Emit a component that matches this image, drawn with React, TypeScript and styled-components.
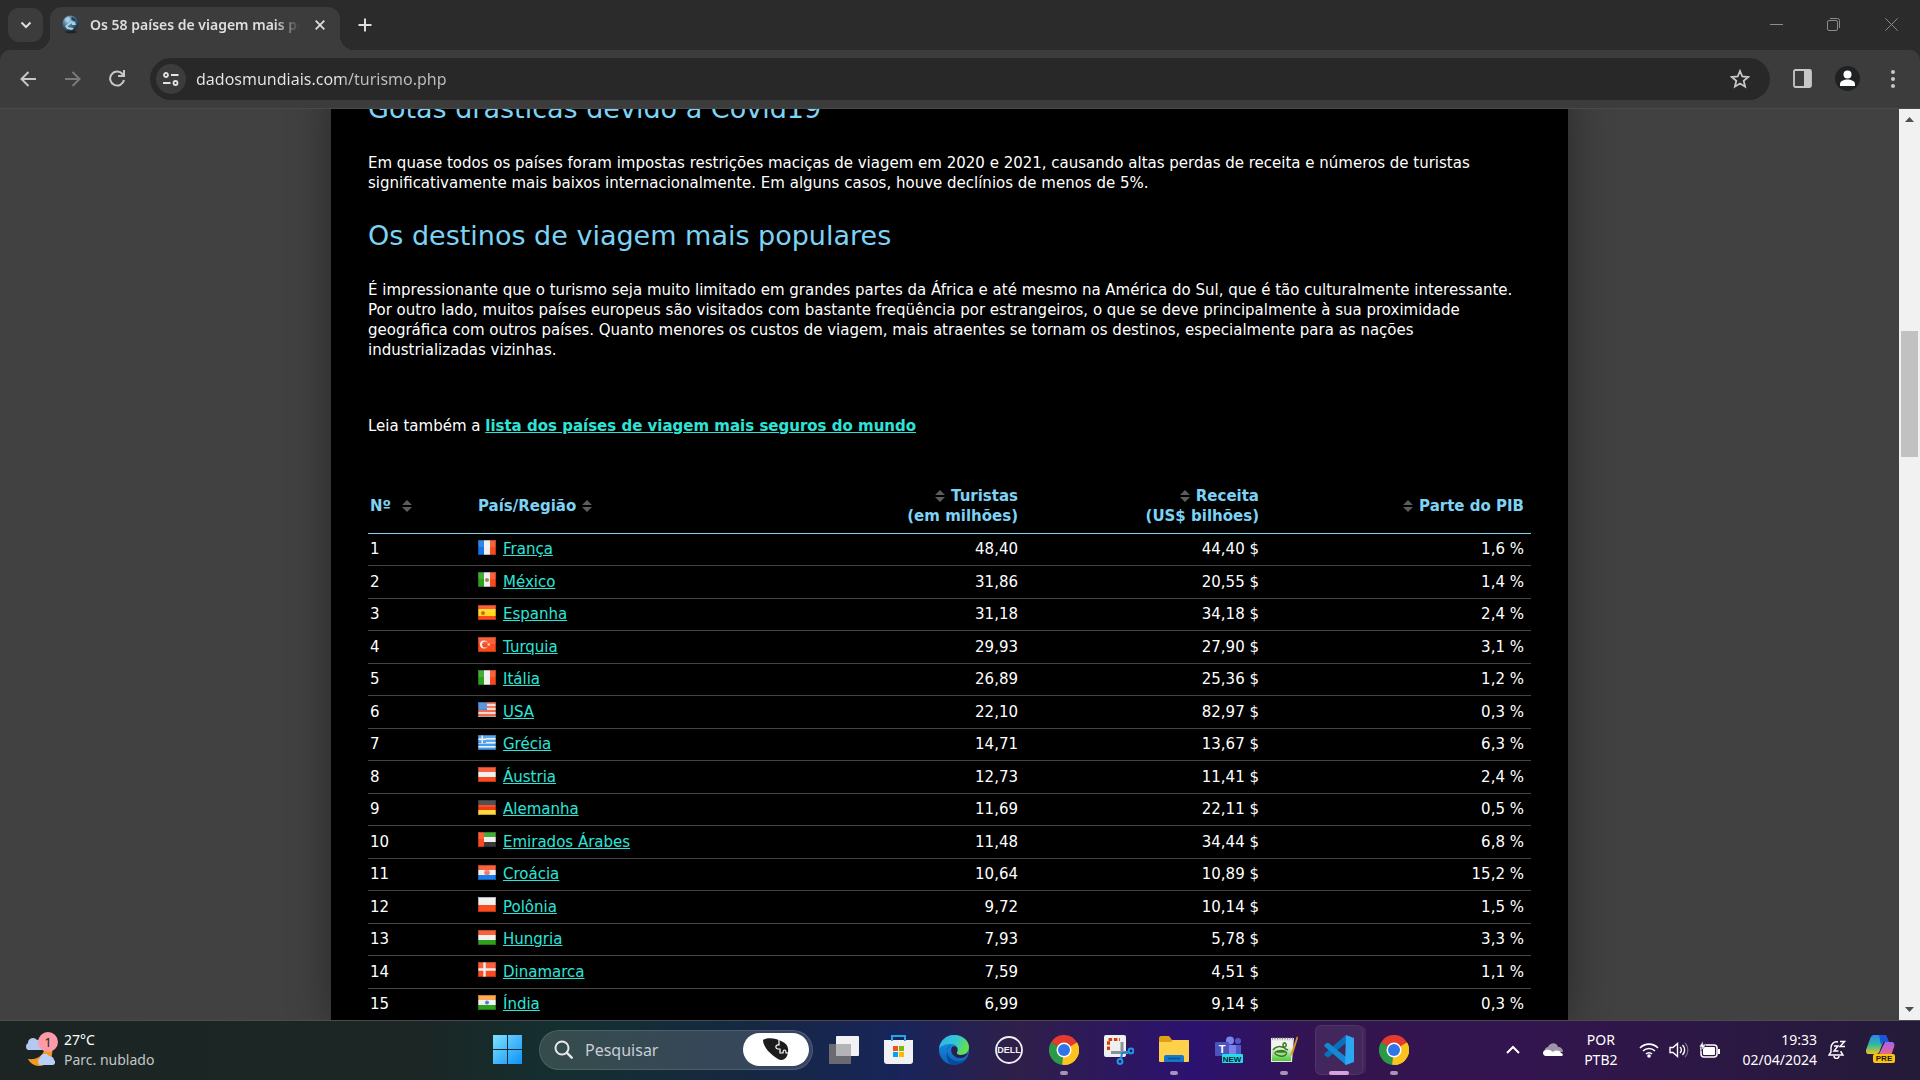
import React from "react";
import styled, { createGlobalStyle, css } from "styled-components";

const uiFont = `"Noto Sans", "Open Sans", sans-serif`;
const pageFont = `"DejaVu Sans", Verdana, sans-serif`;

const GlobalStyle = createGlobalStyle`
  *, *::before, *::after { box-sizing: border-box; }
  html, body { margin: 0; height: 100%; background: #2b2b2b; overflow: hidden; }
  button, input { font: inherit; color: inherit; border: 0; padding: 0; margin: 0; background: none; outline: 0; }
  svg { display: block; flex: none; }
`;

const Screen = styled.div`
  height: 100vh;
  display: flex;
  flex-direction: column;
  font-family: ${uiFont};
`;

/* ---------- browser frame ---------- */

const TabStrip = styled.div`
  flex: none;
  height: 50px;
  display: flex;
  align-items: flex-end;
  padding-left: 8px;
  background: #2b2b2b;
  color: #dedede;
`;

const TabSearch = styled.button`
  width: 35px;
  height: 34px;
  margin: 0 7px 8px 0;
  display: grid;
  place-items: center;
  border-radius: 11px;
  background: #3c3c3c;
`;

const Tab = styled.div`
  position: relative;
  width: 290px;
  height: 43px;
  display: flex;
  align-items: center;
  padding: 0 12px 8px;
  border-radius: 12px 12px 0 0;
  background: #3c3c3c;

  &::before, &::after {
    content: "";
    position: absolute;
    bottom: 0;
    width: 14px;
    height: 14px;
  }
  &::before { right: 100%; background: radial-gradient(circle at 0 0, transparent 14px, #3c3c3c 14px); }
  &::after { left: 100%; background: radial-gradient(circle at 100% 0, transparent 14px, #3c3c3c 14px); }
`;

const TabTitle = styled.span`
  flex: 1;
  margin: 0 12px 0 11px;
  overflow: hidden;
  white-space: nowrap;
  font-size: 14px;
  line-height: 20px;
  font-weight: 600;
  mask-image: linear-gradient(90deg, #000 88%, transparent);
`;

const IconButton = styled.button<{ $w: number; $h?: number }>`
  flex: none;
  width: ${(p) => p.$w}px;
  height: ${(p) => p.$h ?? 34}px;
  display: grid;
  place-items: center;
`;

const NewTab = styled(IconButton)`
  margin: 0 0 8px 8px;
`;

const WindowControls = styled.div`
  margin-left: auto;
  align-self: stretch;
  display: flex;
  color: #8c8c8c;
`;

const ToolbarBack = styled.div`
  flex: none;
  background: #2b2b2b;
`;

const Toolbar = styled.div`
  height: 59px;
  display: flex;
  align-items: center;
  padding: 0 5px 1px 5px;
  border-radius: 10px 10px 0 0;
  border-bottom: 1px solid #4a4a4a;
  background: #3c3c3c;
  color: #c7c7c7;
`;

const AddressBar = styled.div`
  flex: 1;
  height: 42px;
  margin: 0 10px;
  display: flex;
  align-items: center;
  padding: 0 8px 0 6px;
  border-radius: 21px;
  background: #282828;
`;

const SiteInfo = styled(IconButton)`
  border-radius: 50%;
  background: #3c3c3c;
  margin-right: 10px;
  color: #e3e3e3;
`;

const AddressInput = styled.input`
  flex: 1;
  min-width: 0;
  height: 28px;
  font-size: 16px;
  background: linear-gradient(90deg, #e8e8e8 145px, #c0c0c0 145px);
  background-clip: text;
  -webkit-background-clip: text;
  -webkit-text-fill-color: transparent;
`;

/* ---------- web page ---------- */

const Viewport = styled.div`
  flex: 1;
  min-height: 0;
  display: flex;
`;

const PageArea = styled.main`
  flex: 1;
  min-width: 0;
  overflow: hidden;
  background: #414141;
`;

const Article = styled.article`
  max-width: 1237px;
  min-height: 100%;
  margin: -18px auto 0;
  padding: 0 37px;
  background: #000;
  box-shadow: 0 0 40px rgba(0, 0, 0, 0.4);
  color: #fff;
  font-family: ${pageFont};
  font-size: 15px;
  line-height: 20px;
`;

const Heading = styled.h2`
  margin: 0 0 26px;
  font-size: 27px;
  line-height: 36px;
  font-weight: 400;
  color: #7dd3f5;
`;

const Paragraph = styled.p<{ $after: number }>`
  margin: 0 0 ${(p) => p.$after}px;
`;

const Link = styled.a<{ $strong?: boolean }>`
  color: #2ce5d8;
  font-weight: ${(p) => (p.$strong ? 700 : 400)};
  text-decoration: underline;
  text-underline-offset: 1px;
`;

const Table = styled.table`
  width: 100%;
  table-layout: fixed;
  border-collapse: collapse;
`;

const cell = css<{ $right?: boolean }>`
  padding: 0 7px 0 2px;
  text-align: ${(p) => (p.$right ? "right" : "left")};
`;

const HeadCell = styled.th<{ $right?: boolean }>`
  ${cell}
  height: 53px;
  vertical-align: middle;
  border-bottom: 1px solid #87d3ea;
  color: #7dd3f5;
`;

const SortIcon = styled.svg`
  margin-top: 4px;
`;

const Row = styled.tr`
  height: 32px;
  border-bottom: 1px solid #444;
  &:nth-child(even) { height: 33px; }
`;

const Cell = styled.td<{ $right?: boolean }>`
  ${cell}
`;

const Country = styled.span`
  display: flex;
  align-items: center;
  gap: 7px;
`;

const FlagSvg = styled.svg`
  margin-bottom: 4px;
`;

const HeaderLabel = styled.span`
  display: block;
  white-space: nowrap;
`;

const FirstLine = styled.span<{ $right?: boolean }>`
  display: flex;
  gap: 6px;
  justify-content: ${(p) => (p.$right ? "flex-end" : "flex-start")};
  white-space: pre;
`;

const HeaderButton = styled.button`
  width: 100%;
  display: block;
  font-weight: 700;
  text-align: inherit;
`;

const Scrollbar = styled.div`
  flex: none;
  width: 21px;
  display: flex;
  flex-direction: column;
  align-items: center;
  background: #f1f1f1;
  color: #505050;
`;

const ScrollSpace = styled.div<{ $grow: number }>`
  flex: ${(p) => p.$grow} 1 0;
`;

const Thumb = styled.div`
  flex: 126 1 0;
  width: 17px;
  background: #c1c1c1;
`;

/* ---------- taskbar ---------- */

const Taskbar = styled.footer`
  flex: none;
  height: 60px;
  display: grid;
  grid-template-columns: 1fr auto 1fr;
  align-items: center;
  padding: 0 18px 2px 0;
  border-top: 1px solid #4b4a52;
  color: #fff;
  background: linear-gradient(90deg, #1c2524 0%, #1b2625 22%, #142f30 29%, #15293f 38%, #18245a 47%, #2f1f49 53%, #2b1270 62%, #34144f 69%, #32154e 80%, #241b38 100%);
`;

const Weather = styled.button`
  justify-self: start;
  display: flex;
  align-items: center;
  gap: 4px;
  margin-left: 24px;
  text-align: left;
`;

const Lines = styled.span<{ $align?: string }>`
  display: flex;
  flex-direction: column;
  text-align: ${(p) => p.$align ?? "left"};
  font-size: 14px;
  line-height: 20px;
  white-space: nowrap;
`;

const Dim = styled.span`
  color: #c3c6c6;
`;

const Apps = styled.div`
  display: flex;
  align-items: center;
  gap: 7px;
`;

const AppButton = styled.button<{ $active?: boolean }>`
  position: relative;
  width: 48px;
  height: 50px;
  display: grid;
  place-items: center;
  border-radius: 6px;
  ${(p) => p.$active && "background: rgba(255,255,255,.08); box-shadow: inset 0 0 0 1px rgba(255,255,255,.07), 4px 0 0 -1px rgba(255,255,255,.07);"}
`;

const Running = styled.span<{ $active?: boolean }>`
  position: absolute;
  left: 50%;
  bottom: 0;
  width: ${(p) => (p.$active ? 20 : 8)}px;
  height: 4px;
  border-radius: 2px;
  transform: translateX(-50%);
  background: ${(p) => (p.$active ? "#d9a0e0" : "#a394b8")};
`;

const SearchBox = styled.label`
  width: 274px;
  height: 40px;
  display: flex;
  align-items: center;
  gap: 12px;
  padding: 0 3px 0 14px;
  border-radius: 20px;
  border: 1px solid rgba(255, 255, 255, 0.12);
  background: rgba(255, 255, 255, 0.14);
`;

const SearchInput = styled.input`
  flex: 1;
  min-width: 0;
  font-size: 16px;
  line-height: 22px;
  &::placeholder { color: #c8ced6; opacity: 1; }
`;

const Highlight = styled.button`
  width: 66px;
  height: 33px;
  display: grid;
  place-items: center;
  border-radius: 17px;
  background: #fff;
`;

const Tray = styled.div`
  justify-self: end;
  display: flex;
  align-items: center;
`;

const TrayButton = styled.button<{ $gap: number }>`
  display: flex;
  align-items: center;
  gap: 10px;
  margin-right: ${(p) => p.$gap}px;
`;

/* ---------- drawings ---------- */

const P = (props: { d: string; w?: number; c?: string }) => (
  <path d={props.d} fill="none" stroke={props.c ?? "currentColor"} strokeWidth={props.w ?? 2} strokeLinecap="butt" />
);

const Favicon = () => (
  <svg width="17" height="19" viewBox="0 0 17 19">
    <defs>
      <radialGradient id="globe" cx="35%" cy="30%" r="75%">
        <stop offset="0" stopColor="#b9d9ea" /><stop offset=".45" stopColor="#4a7f9f" /><stop offset="1" stopColor="#16283a" />
      </radialGradient>
    </defs>
    <ellipse cx="9" cy="17" rx="6" ry="1.5" fill="#222" />
    <circle cx="8.5" cy="8.5" r="8" fill="url(#globe)" />
    <path d="M3 4l3-2 2 1-1 3-3 1zM9 6l4 1 1 3-4 0 0-2-4 3 0 1 6 1-2 2-5-1-2-3z" fill="#a9cfe2" />
    <path d="M10 2l4 3-2 1-3-2z" fill="#20394e" />
  </svg>
);

type Shape = React.ReactNode;
const v = (a: string, b: string, c: string): Shape => (<><rect width="6" height="15" fill={a} /><rect x="6" width="6" height="15" fill={b} /><rect x="12" width="6" height="15" fill={c} /></>);
const h = (a: string, b: string, c: string): Shape => (<><rect width="18" height="5" fill={a} /><rect y="5" width="18" height="5" fill={b} /><rect y="10" width="18" height="5" fill={c} /></>);
const RED = "#fa4a1e", GREEN = "#2ea01c", WHITE = "#f0f0f0", BLUE = "#1a7df0";

const flags: Record<string, Shape> = {
  fr: v("#1673e8", WHITE, RED),
  mx: <>{v(GREEN, WHITE, RED)}<circle cx="9" cy="8" r="2" fill="#9a8a4a" /></>,
  es: <><rect width="18" height="15" fill={RED} /><rect y="4" width="18" height="7" fill="#ffd91a" /><circle cx="5" cy="8" r="2" fill="#d8601a" /></>,
  tr: <><rect width="18" height="15" fill={RED} /><circle cx="6" cy="7.5" r="4" fill={WHITE} /><circle cx="7.2" cy="7.5" r="3.1" fill={RED} /><path d="M9 7.5l2.6-1.5v3z" fill={WHITE} /></>,
  it: v(GREEN, WHITE, RED),
  us: <><rect width="18" height="15" fill="#f4d8d0" />{[0, 4, 8, 12].map((y) => <rect key={y} y={y} width="18" height="2" fill="#ee6a50" />)}<rect width="9" height="8" fill="#4688d8" /></>,
  gr: <><rect width="18" height="15" fill="#3f9cf0" />{[3, 7, 11].map((y) => <rect key={y} y={y} width="18" height="1.6" fill={WHITE} />)}<rect width="8" height="8" fill="#3f9cf0" /><path d="M0 4.2h8M4.2 0v8.5" stroke={WHITE} strokeWidth="1.4" /></>,
  at: h(RED, WHITE, RED),
  de: h("#3a3a3a", "#ee3a14", "#ffd83a"),
  ae: <>{h(GREEN, WHITE, "#3a3a3a")}<rect width="6" height="15" fill={RED} /></>,
  hr: <>{h(RED, WHITE, BLUE)}<circle cx="9" cy="7.5" r="2.8" fill="#ee7a6a" /></>,
  pl: <><rect width="18" height="15" fill={RED} /><rect width="18" height="8" fill={WHITE} /></>,
  hu: h(RED, WHITE, GREEN),
  dk: <><rect width="18" height="15" fill={RED} /><path d="M0 7.5h18M6.5 0v15" stroke={WHITE} strokeWidth="2.4" /></>,
  in: <>{h("#ffa03a", WHITE, GREEN)}<circle cx="9" cy="7.5" r="2" fill="#3a80dd" /></>,
};

const Flag = ({ code }: { code: string }) => (
  <FlagSvg width="18" height="15" viewBox="0 0 18 15">
    {flags[code]}
    <rect width="18" height="7" fill="#fff" opacity=".12" />
    <rect x=".5" y=".5" width="17" height="14" fill="none" stroke="#000" strokeOpacity=".25" />
  </FlagSvg>
);

const Sort = () => (
  <SortIcon width="10" height="12" viewBox="0 0 10 12"><path d="M0 5L5 0l5 5zM0 7h10l-5 5z" fill="#5c5c5c" /></SortIcon>
);

const Chrome = () => (
  <svg width="30" height="30" viewBox="0 0 48 48">
    <path d="M24 24L3.2 12A24 24 0 0 1 44.8 12z" fill="#e33b2e" />
    <path d="M24 24L44.8 12A24 24 0 0 1 24 48z" fill="#fcc31e" />
    <path d="M24 24V48A24 24 0 0 1 3.2 12z" fill="#2a9a48" />
    <path d="M33.5 29.5L24 48l-3-1 3-23z" fill="#fcc31e" />
    <path d="M24 24L14.5 29.5 3.2 12z" fill="#2a9a48" />
    <path d="M24 12h20.8L33 24H15z" fill="#e33b2e" />
    <path d="M34.4 18L44.8 12a24 24 0 0 1-20.8 36l10.4-18z" fill="#fcc31e" />
    <circle cx="24" cy="24" r="12" fill="#fff" /><circle cx="24" cy="24" r="9.6" fill="#2f74e8" />
  </svg>
);

const Start = () => (
  <svg width="30" height="30" viewBox="0 0 30 30">
    <defs><linearGradient id="win" x1="0" y1="0" x2="30" y2="30" gradientUnits="userSpaceOnUse"><stop stopColor="#7fe0ff" /><stop offset="1" stopColor="#0a90f8" /></linearGradient></defs>
    <path d="M0 0h14v14H0zM15 0h14v14H15zM0 15h14v14H0zM15 15h14v14H15z" fill="url(#win)" />
  </svg>
);

const TaskView = () => (
  <svg width="30" height="28" viewBox="0 0 30 28">
    <rect y="8" width="22" height="20" rx="1" fill="#6a6a70" /><rect x="7" width="23" height="20" rx="1" fill="#f2f2f4" /><rect x="7" y="8" width="15" height="12" fill="#b4b4b8" />
  </svg>
);

const Store = () => (
  <svg width="30" height="30" viewBox="0 0 30 30">
    <path d="M0 5h29v21a3 3 0 0 1-3 3H3a3 3 0 0 1-3-3z" fill="#f1f1f3" /><path d="M7 0h15v6h-2V2H9v4H7z" fill="#22a6ea" />
    <rect x="9" y="11" width="5" height="5" fill="#f25022" /><rect x="15" y="11" width="5" height="5" fill="#7fba00" /><rect x="9" y="17" width="5" height="5" fill="#00a4ef" /><rect x="15" y="17" width="5" height="5" fill="#ffb900" />
  </svg>
);

const Edge = () => (
  <svg width="30" height="30" viewBox="0 0 30 30">
    <defs>
      <linearGradient id="e1" x1="0" y1="0" x2="1" y2=".4"><stop stopColor="#2ab4ee" /><stop offset=".6" stopColor="#34c6d2" /><stop offset="1" stopColor="#66e04a" /></linearGradient>
      <linearGradient id="e2" x1="0" y1="0" x2="0" y2="1"><stop stopColor="#1b9be0" /><stop offset="1" stopColor="#0a5fc0" /></linearGradient>
    </defs>
    <circle cx="15" cy="15" r="15" fill="url(#e2)" />
    <path d="M0 14C1 5 8 0 15 0c9 0 15 6 15 12 0 5-4 8-8 8-3 0-5-1-4-3 2-2 1-8-6-8C6 9 1 11 0 14z" fill="url(#e1)" />
    <path d="M12 10c-4 1-5 6-3 10 3 6 10 8 17 5-3 4-8 5-12 5C6 28 6 13 12 10z" fill="#0b4a94" />
    <path d="M13 12c3-2 7 1 5 5-1 2 1 3 4 3 3 0 6-1 7-3-1 4-4 6-8 6-6 0-11-6-8-11z" fill="#2a1f48" />
  </svg>
);

const IconText = styled.text<{ $size: number }>`
  font: 700 ${(p) => p.$size}px "Liberation Sans", sans-serif;
`;

const Dell = () => (
  <svg width="28" height="28" viewBox="0 0 28 28">
    <circle cx="14" cy="14" r="13" fill="none" stroke="#f0f0f0" strokeWidth="1.8" />
    <IconText $size={9} x="14" y="17" textAnchor="middle" fill="#f0f0f0">DELL</IconText>
  </svg>
);

const Snip = () => (
  <svg width="30" height="30" viewBox="0 0 30 30">
    <rect width="22" height="22" rx="2" fill="#eef0f2" />
    <path d="M4.500 15V4.500H16" fill="none" stroke="#d83b01" strokeWidth="3" strokeDasharray="3.500 1.800" />
    <path d="M18 7v12M7 17.500h17" fill="none" stroke="#8c9298" strokeWidth="3" />
    <path d="M17 24l1-6 7-1" fill="none" stroke="#1a86d8" strokeWidth="2" />
    <circle cx="27" cy="16" r="2.400" fill="none" stroke="#1a9ae8" strokeWidth="2" /><circle cx="16" cy="26.500" r="2.400" fill="none" stroke="#1a9ae8" strokeWidth="2" />
  </svg>
);

const Folder = () => (
  <svg width="30" height="27" viewBox="0 0 30 27">
    <path d="M0 2a2 2 0 0 1 2-2h8l3 4h17v8H0z" fill="#e0a015" /><path d="M0 6h12l2-2h15l1 1v20a1 1 0 0 1-1 1H1a1 1 0 0 1-1-1z" fill="#ffd04a" />
    <path d="M5 26v-5a2 2 0 0 1 2-2h16a2 2 0 0 1 2 2v5z" fill="#1478c8" /><path d="M9 22.500h12" stroke="#0d4f92" strokeWidth="1.500" />
  </svg>
);

const Teams = () => (
  <svg width="28" height="28" viewBox="0 0 28 28">
    <circle cx="15" cy="4.500" r="4" fill="#7b83eb" /><circle cx="23" cy="5" r="3" fill="#5059c9" />
    <path d="M17 9h9v8a4 4 0 0 1-9 2z" fill="#5059c9" /><path d="M9 9h12v10H9z" fill="#7b83eb" />
    <rect y="6" width="14" height="14" rx="1" fill="#4b53bc" /><IconText $size={11} x="7" y="17" textAnchor="middle" fill="#fff">T</IconText>
    <rect x="7" y="18" width="21" height="9" rx="1" fill="#1fe0e6" /><IconText $size={8} x="17" y="26" textAnchor="middle" fill="#10142a">NEW</IconText>
  </svg>
);

const Notepad = () => (
  <svg width="28" height="28" viewBox="0 0 28 28">
    <defs><linearGradient id="np" x1="0" y1="0" x2="0" y2="1"><stop offset=".3" stopColor="#f2f4ee" /><stop offset="1" stopColor="#4cc832" /></linearGradient></defs>
    <path d="M1 2h23l-2 24H1z" fill="#e8e8e8" /><path d="M2 5h20l-1 20H2z" fill="url(#np)" />
    <path d="M2 2.500h21" stroke="#888" strokeWidth="2" strokeDasharray="1 1.500" />
    <path d="M3 14c2-3 6-4 9-3s5-1 4-3-3-1-3 1 2 4 5 5M5 17c1-3 9-3 11-1s-2 5-6 4-5-2-5-3zM7 16h8" fill="none" stroke="#3a7a24" strokeWidth="1.500" />
    <path d="M27 0l-6 17-1 3 3-2L28 2z" fill="#d89a28" />
  </svg>
);

const VSCode = () => (
  <svg width="30" height="30" viewBox="0 0 30 30">
    <path d="M22 0v8L4 22.500 0.500 20.500v-2z" fill="#0a70bc" /><path d="M22 30v-8L4 7.500 0.500 9.500v2z" fill="#1488d2" />
    <path d="M22 0l8 3v24l-8 3-1-1z" fill="#2ba6f0" />
  </svg>
);

const Copilot = () => (
  <svg width="30" height="30" viewBox="0 0 30 30">
    <defs>
      <linearGradient id="c1" x1="0" y1="0" x2="0" y2="1"><stop stopColor="#2a86f0" /><stop offset=".5" stopColor="#30b8a0" /><stop offset="1" stopColor="#e8c820" /></linearGradient>
      <linearGradient id="c2" x1="0" y1="0" x2="0" y2="1"><stop stopColor="#a860f0" /><stop offset="1" stopColor="#f06a80" /></linearGradient>
    </defs>
    <path d="M8 0h12l-6 15c-1 3-2 4-4 4H3c-3 0-3-2-3-4L4 4c1-3 2-4 4-4z" fill="url(#c1)" />
    <path d="M13 0h5c3 0 3 2 4 4l1 3h-5c-2 0-2 1-3 3z" fill="#1a56d8" />
    <path d="M19 7h6c3 0 4 2 3 5l-2 6c-1 2-2 3-4 3H12z" fill="url(#c2)" />
    <rect x="7" y="19" width="22" height="9" rx="2" fill="#ffc20e" /><IconText $size={8} x="18" y="26" textAnchor="middle" fill="#1a1a1a">PRE</IconText>
  </svg>
);

const BadgeText = styled.text`
  font: 400 13px ${uiFont};
`;

const WeatherIcon = () => (
  <svg width="36" height="36" viewBox="0 0 36 36">
    <path d="M28 16c2 10-5 18-13 18-5 0-9-3-11-7 9 1 15-3 17-11z" fill="#f39a1e" />
    <path d="M4 18a4 4 0 0 1 0-7 5 5 0 0 1 9-3c4-1 8 2 6 8v2z" fill="#b4c8f2" />
    <path d="M16 33a4 4 0 0 1 0-7 5 5 0 0 1 9-2c3 0 5 2 5 4 2 1 1 5-1 5z" fill="#b8cff8" />
    <circle cx="24" cy="10" r="10" fill="#ff9aa8" />
    <BadgeText x="24" y="15" textAnchor="middle" fill="#222">1</BadgeText>
  </svg>
);

const Chevron = ({ up }: { up?: boolean }) => (
  <svg width="14" height="10" viewBox="0 0 14 10"><P d={up ? "M1 8l6-6 6 6" : "M2.500 2.500l4.500 4.500 4.500-4.500"} /></svg>
);

/* ---------- data ---------- */

const rows: [string, string, string, string, string][] = [
  ["fr", "França", "48,40", "44,40 $", "1,6 %"],
  ["mx", "México", "31,86", "20,55 $", "1,4 %"],
  ["es", "Espanha", "31,18", "34,18 $", "2,4 %"],
  ["tr", "Turquia", "29,93", "27,90 $", "3,1 %"],
  ["it", "Itália", "26,89", "25,36 $", "1,2 %"],
  ["us", "USA", "22,10", "82,97 $", "0,3 %"],
  ["gr", "Grécia", "14,71", "13,67 $", "6,3 %"],
  ["at", "Áustria", "12,73", "11,41 $", "2,4 %"],
  ["de", "Alemanha", "11,69", "22,11 $", "0,5 %"],
  ["ae", "Emirados Árabes", "11,48", "34,44 $", "6,8 %"],
  ["hr", "Croácia", "10,64", "10,89 $", "15,2 %"],
  ["pl", "Polônia", "9,72", "10,14 $", "1,5 %"],
  ["hu", "Hungria", "7,93", "5,78 $", "3,3 %"],
  ["dk", "Dinamarca", "7,59", "4,51 $", "1,1 %"],
  ["in", "Índia", "6,99", "9,14 $", "0,3 %"],
];

const apps: { name: string; icon: React.ReactNode; running?: boolean; active?: boolean }[] = [
  { name: "Visão de tarefas", icon: <TaskView /> },
  { name: "Microsoft Store", icon: <Store /> },
  { name: "Edge", icon: <Edge /> },
  { name: "Dell", icon: <Dell /> },
  { name: "Chrome", icon: <Chrome />, running: true },
  { name: "Captura", icon: <Snip /> },
  { name: "Explorador", icon: <Folder />, running: true },
  { name: "Teams", icon: <Teams /> },
  { name: "Notepad++", icon: <Notepad />, running: true },
  { name: "VS Code", icon: <VSCode />, running: true, active: true },
  { name: "Chrome", icon: <Chrome />, running: true },
];

const columns: { label: string; right?: boolean }[] = [
  { label: "Nº " },
  { label: "País/Região" },
  { label: "Turistas\n(em milhões)", right: true },
  { label: "Receita\n(US$ bilhões)", right: true },
  { label: "Parte do PIB", right: true },
];

export default function App() {
  return (
    <Screen>
      <GlobalStyle />
      <TabStrip>
        <TabSearch aria-label="Pesquisar guias"><Chevron /></TabSearch>
        <Tab>
          <Favicon />
          <TabTitle>Os 58 países de viagem mais populares</TabTitle>
          <IconButton $w={16} $h={20} aria-label="Fechar guia">
            <svg width="10" height="10" viewBox="0 0 10 10"><P d="M.7.7l8.600 8.600M9.300.7L.7 9.300" w={1.8} /></svg>
          </IconButton>
        </Tab>
        <NewTab $w={34} aria-label="Nova guia">
          <svg width="14" height="14" viewBox="0 0 14 14"><P d="M7 0.500v13M.5 7h13" /></svg>
        </NewTab>
        <WindowControls>
          <IconButton $w={57} $h={48} aria-label="Minimizar"><svg width="13" height="13" viewBox="0 0 13 13"><P d="M0 6.500h13" w={1} /></svg></IconButton>
          <IconButton $w={57} $h={48} aria-label="Restaurar">
            <svg width="13" height="13" viewBox="0 0 13 13"><rect x=".5" y="2.500" width="10" height="10" rx="1.500" fill="none" stroke="currentColor" /><P d="M3 .5h7.500a2 2 0 0 1 2 2V10" w={1} /></svg>
          </IconButton>
          <IconButton $w={58} $h={48} aria-label="Fechar"><svg width="13" height="13" viewBox="0 0 13 13"><P d="M.3.3l12.400 12.400M12.700.3L.3 12.700" w={1} /></svg></IconButton>
        </WindowControls>
      </TabStrip>
      <ToolbarBack>
        <Toolbar>
          <IconButton $w={45} aria-label="Voltar"><svg width="16" height="16" viewBox="0 0 16 16"><P d="M16 8H2M8.500 1L1.500 8l7 7" /></svg></IconButton>
          <IconButton $w={45} aria-label="Avançar"><svg width="16" height="16" viewBox="0 0 16 16"><P d="M0 8h14M7.500 1l7 7-7 7" c="#7a7a7a" /></svg></IconButton>
          <IconButton $w={45} aria-label="Recarregar"><svg width="17" height="17" viewBox="0 0 17 17"><P d="M15 10a7 7 0 1 1-1.500-6L15.500 6" /><path d="M16 0v7H9V5h5V0z" fill="currentColor" /></svg></IconButton>
          <AddressBar>
            <SiteInfo $w={30} $h={30} aria-label="Informações do site">
              <svg width="16" height="14" viewBox="0 0 16 14"><circle cx="3" cy="3" r="2" fill="none" stroke="currentColor" strokeWidth="1.800" /><circle cx="12.500" cy="11" r="2" fill="none" stroke="currentColor" strokeWidth="1.800" /><P d="M8 3h7.500M0 11h7.500" w={1.8} /></svg>
            </SiteInfo>
            <AddressInput aria-label="Endereço" defaultValue="dadosmundiais.com/turismo.php" />
            <IconButton $w={44} aria-label="Favoritar">
              <svg width="20" height="20" viewBox="0 0 20 20"><path d="M10 2l2.300 5.500 5.900.5-4.500 3.900 1.400 5.800L10 14.600l-5.100 3.100 1.400-5.800L1.800 8l5.900-.5z" fill="none" stroke="currentColor" strokeWidth="1.800" /></svg>
            </IconButton>
          </AddressBar>
          <IconButton $w={45} aria-label="Painel lateral">
            <svg width="19" height="19" viewBox="0 0 19 19"><rect x="1" y="1" width="17" height="17" rx="1.500" fill="none" stroke="currentColor" strokeWidth="1.800" /><rect x="11" y="1" width="7" height="17" fill="currentColor" /></svg>
          </IconButton>
          <IconButton $w={45} aria-label="Perfil">
            <svg width="25" height="25" viewBox="0 0 25 25"><circle cx="12.500" cy="12.500" r="12.500" fill="#1f2223" /><circle cx="12.500" cy="8.500" r="4" fill="#fff" /><path d="M5 20v-2c0-3 4-4.500 7.500-4.500S20 15 20 18v2z" fill="#fff" /></svg>
          </IconButton>
          <IconButton $w={45} aria-label="Menu">
            <svg width="4" height="18" viewBox="0 0 4 18"><circle cx="2" cy="2" r="2" fill="currentColor" /><circle cx="2" cy="9" r="2" fill="currentColor" /><circle cx="2" cy="16" r="2" fill="currentColor" /></svg>
          </IconButton>
        </Toolbar>
      </ToolbarBack>

      <Viewport>
        <PageArea>
          <Article>
            <Heading>Gotas drásticas devido à Covid19</Heading>
            <Paragraph $after={25}>Em quase todos os países foram impostas restrições maciças de viagem em 2020 e 2021, causando altas perdas de receita e números de turistas significativamente mais baixos internacionalmente. Em alguns casos, houve declínios de menos de 5%.</Paragraph>
            <Heading>Os destinos de viagem mais populares</Heading>
            <Paragraph $after={56}>É impressionante que o turismo seja muito limitado em grandes partes da África e até mesmo na América do Sul, que é tão culturalmente interessante. Por outro lado, muitos países europeus são visitados com bastante freqüência por estrangeiros, o que se deve principalmente à sua proximidade geográfica com outros países. Quanto menores os custos de viagem, mais atraentes se tornam os destinos, especialmente para as nações industrializadas vizinhas.</Paragraph>
            <Paragraph $after={44}>Leia também a <Link $strong href="#seguros">lista dos países de viagem mais seguros do mundo</Link></Paragraph>
            <Table>
              <colgroup><col width="108" /><col width="343" /><col width="206" /><col width="241" /><col /></colgroup>
              <thead>
                <tr>
                  {columns.map((c) => {
                    const [first, second] = c.label.split("\n");
                    return (
                      <HeadCell key={c.label} $right={c.right} scope="col">
                        <HeaderButton>
                          <FirstLine $right={c.right}>{c.right && <Sort />}{first}{!c.right && <Sort />}</FirstLine>
                          {second && <HeaderLabel>{second}</HeaderLabel>}
                        </HeaderButton>
                      </HeadCell>
                    );
                  })}
                </tr>
              </thead>
              <tbody>
                {rows.map(([code, name, tourists, income, share], i) => (
                  <Row key={code}>
                    <Cell>{i + 1}</Cell>
                    <Cell><Country><Flag code={code} /><Link href={"#" + code}>{name}</Link></Country></Cell>
                    <Cell $right>{tourists}</Cell>
                    <Cell $right>{income}</Cell>
                    <Cell $right>{share}</Cell>
                  </Row>
                ))}
              </tbody>
            </Table>
          </Article>
        </PageArea>
        <Scrollbar>
          <IconButton $w={21} $h={21} aria-label="Rolar para cima"><svg width="9" height="5" viewBox="0 0 9 5"><path d="M0 5L4.500 0 9 5z" fill="currentColor" /></svg></IconButton>
          <ScrollSpace $grow={201} />
          <Thumb />
          <ScrollSpace $grow={542} />
          <IconButton $w={21} $h={21} aria-label="Rolar para baixo"><svg width="9" height="5" viewBox="0 0 9 5"><path d="M0 0h9L4.500 5z" fill="currentColor" /></svg></IconButton>
        </Scrollbar>
      </Viewport>

      <Taskbar>
        <Weather>
          <WeatherIcon />
          <Lines><span>27°C</span><Dim>Parc. nublado</Dim></Lines>
        </Weather>
        <Apps>
          <AppButton aria-label="Iniciar"><Start /></AppButton>
          <SearchBox>
            <svg width="19" height="19" viewBox="0 0 19 19"><circle cx="8" cy="8" r="6.500" fill="none" stroke="#e6eaec" strokeWidth="2" /><path d="M12.700 12.700l5 5" stroke="#e6eaec" strokeWidth="2.400" strokeLinecap="round" /></svg>
            <SearchInput aria-label="Pesquisar" placeholder="Pesquisar" />
            <Highlight aria-label="Destaque da pesquisa">
              <svg width="26" height="23" viewBox="0 0 26 23"><path d="M0 2C4-1 14 0 20 4c6 3 6 9 4 14-2 4-6 5-9 3C8 17 0 9 0 2z" fill="#1c1c1c" /><P d="M16 1v6c-4-1-4 4-1 4h2v4h3c0-4 3-4 3 0h3" c="#fff" w={1.2} /></svg>
            </Highlight>
          </SearchBox>
          {apps.map((a, i) => (
            <AppButton key={i} aria-label={a.name} $active={a.active}>{a.icon}{a.running && <Running $active={a.active} />}</AppButton>
          ))}
        </Apps>
        <Tray>
          <TrayButton $gap={23} aria-label="Ícones ocultos"><Chevron up /></TrayButton>
          <TrayButton $gap={21} aria-label="OneDrive">
            <svg width="20" height="13" viewBox="0 0 20 13"><path d="M2 9C1 5 4 4 5 4c2-5 9-5 10 0 3 0 5 2 5 5z" fill="#9c95aa" /><path d="M3 13c-4 0-4-6 0-6 4-1 5 1 7 2 2-2 7-2 8 1 3 1 2 3 0 3z" fill="#fff" /></svg>
          </TrayButton>
          <TrayButton $gap={21}><Lines $align="center">POR<span>PTB2</span></Lines></TrayButton>
          <TrayButton $gap={23} aria-label="Rede, som e bateria">
            <svg width="20" height="16" viewBox="0 0 20 16"><P d="M1 6a12.500 12.500 0 0 1 18 0M4 9a8.500 8.500 0 0 1 12 0M7 12a4.200 4.200 0 0 1 6 0" w={1.6} /><circle cx="10" cy="14" r="1.800" fill="currentColor" /></svg>
            <svg width="20" height="16" viewBox="0 0 20 16"><P d="M1 5.500h3L8.500 1.500v13L4 10.500H1zM11 5a4 4 0 0 1 0 6M13.500 3a7 7 0 0 1 0 10" w={1.4} /><P d="M16 1a10 10 0 0 1 0 14" w={1.2} c="#7c7189" /></svg>
            <svg width="21" height="17" viewBox="0 0 21 17"><rect x="2" y="4" width="16" height="12" rx="3" fill="none" stroke="currentColor" strokeWidth="1.500" /><rect x="4" y="6" width="12" height="8" rx="1" fill="currentColor" /><path d="M19 8h2v5h-2z" fill="currentColor" /><path d="M4 0L0 6h3l-1 4 5-6H4z" fill="currentColor" stroke="#2a1840" strokeWidth=".5" /></svg>
          </TrayButton>
          <TrayButton $gap={11}><Lines $align="right">19:33<span>02/04/2024</span></Lines></TrayButton>
          <TrayButton $gap={20} aria-label="Notificações">
            <svg width="18" height="19" viewBox="0 0 18 19"><P d="M10 2C6 1 3 4 3 8v4l-2 3h14l-2-3v-1M6 16a2.500 2.500 0 0 0 5 0M12 1.500h4.500L12 6.500H17M6 6h4L6 11h4.500" w={1.4} /></svg>
          </TrayButton>
          <TrayButton $gap={6} aria-label="Copilot"><Copilot /></TrayButton>
        </Tray>
      </Taskbar>
    </Screen>
  );
}
